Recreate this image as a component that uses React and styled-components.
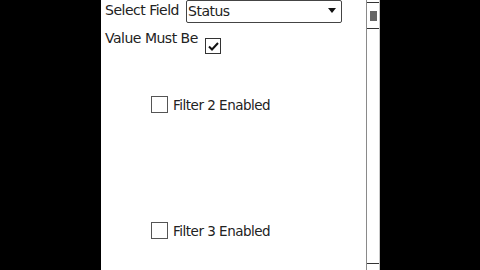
import styled, { createGlobalStyle } from "styled-components";

const Global = createGlobalStyle`
    html, body {
        margin: 0;
        padding: 0;
        background: #000000;
        width: 480px;
        height: 270px;
        overflow: hidden;
    }
`;

export default function App(){
    return(
        <Screen>
            <Global />
            <Panel>
                <Content>
                    <Row>
                        <Label>Select Field</Label>
                        <Select>
                            <span>Status</span>
                            <Arrow />
                        </Select>
                    </Row>

                    <Row top={7}>
                        <Label pad={0}>Value Must Be</Label>
                        <Check checked offset={8}>
                            <svg width="11" height="9" viewBox="0 0 11 9">
                                <path d="M1 4.5 L4 7.5 L10 1" stroke="#111" strokeWidth="2" fill="none" />
                            </svg>
                        </Check>
                    </Row>

                    <Filter top={42}>
                        <Check />
                        <span>Filter 2 Enabled</span>
                    </Filter>

                    <Filter top={109}>
                        <Check />
                        <span>Filter 3 Enabled</span>
                    </Filter>
                </Content>

                <ScrollBar>
                    <Thumb>
                        <div />
                    </Thumb>
                    <Track />
                    <BottomCap />
                </ScrollBar>
            </Panel>
        </Screen>
    );
}

const Screen = styled.div`
    width: 480px;
    height: 270px;
    display: flex;
    padding-left: 101px;
    box-sizing: border-box;
    background: #000000;
`;

const Panel = styled.div`
    width: 279px;
    height: 270px;
    background: #ffffff;
    display: flex;
`;

const Content = styled.div`
    flex: 1;
    display: flex;
    flex-direction: column;
    padding-left: 4px;
    font-family: "DejaVu Sans", sans-serif;
    font-size: 14px;
    line-height: 16px;
    letter-spacing: -0.5px;
    color: #222222;
`;

const Row = styled.div`
    display: flex;
    align-items: flex-start;
    margin-top: ${p => p.top || 0}px;
    min-height: 23px;
`;

const Label = styled.span`
    width: 81px;
    padding-top: ${p => p.pad ?? 2}px;
    white-space: nowrap;
`;

const Select = styled.div`
    width: 156px;
    height: 23px;
    box-sizing: border-box;
    border: 1px solid #444444;
    border-radius: 2px;
    display: flex;
    align-items: center;
    justify-content: space-between;
    padding: 0 5px 2px 1px;
`;

const Arrow = styled.div`
    width: 0;
    height: 0;
    border-left: 4px solid transparent;
    border-right: 4px solid transparent;
    border-top: 5px solid #111111;
`;

const Check = styled.div`
    width: 16px;
    height: 16px;
    box-sizing: border-box;
    border: 1px solid #333333;
    display: flex;
    align-items: center;
    justify-content: center;
    margin-top: ${p => p.offset || 0}px;
    margin-left: ${p => p.checked ? "19px" : "0"};
    background: #ffffff;
`;

const Filter = styled.label`
    display: flex;
    align-items: center;
    gap: 5px;
    margin-top: ${p => p.top}px;
    padding-left: 46px;
    font-size: 13.5px;

    ${Check}{
        width: 17px;
        height: 17px;
        border-color: #555555;
    }
`;

const ScrollBar = styled.div`
    width: 14px;
    height: 270px;
    box-sizing: border-box;
    border-left: 1px solid #8a8a8a;
    border-right: 1px solid #c8c8c8;
    display: flex;
    flex-direction: column;
    padding-top: 2px;
`;

const Thumb = styled.div`
    height: 25px;
    border-top: 1px solid #333333;
    border-bottom: 1px solid #333333;
    display: flex;
    align-items: center;
    justify-content: center;

    div{
        width: 7px;
        height: 10px;
        background: #666666;
    }
`;

const Track = styled.div`
    flex: 1;
`;

const BottomCap = styled.div`
    height: 6px;
    border-top: 1px solid #333333;
`;
